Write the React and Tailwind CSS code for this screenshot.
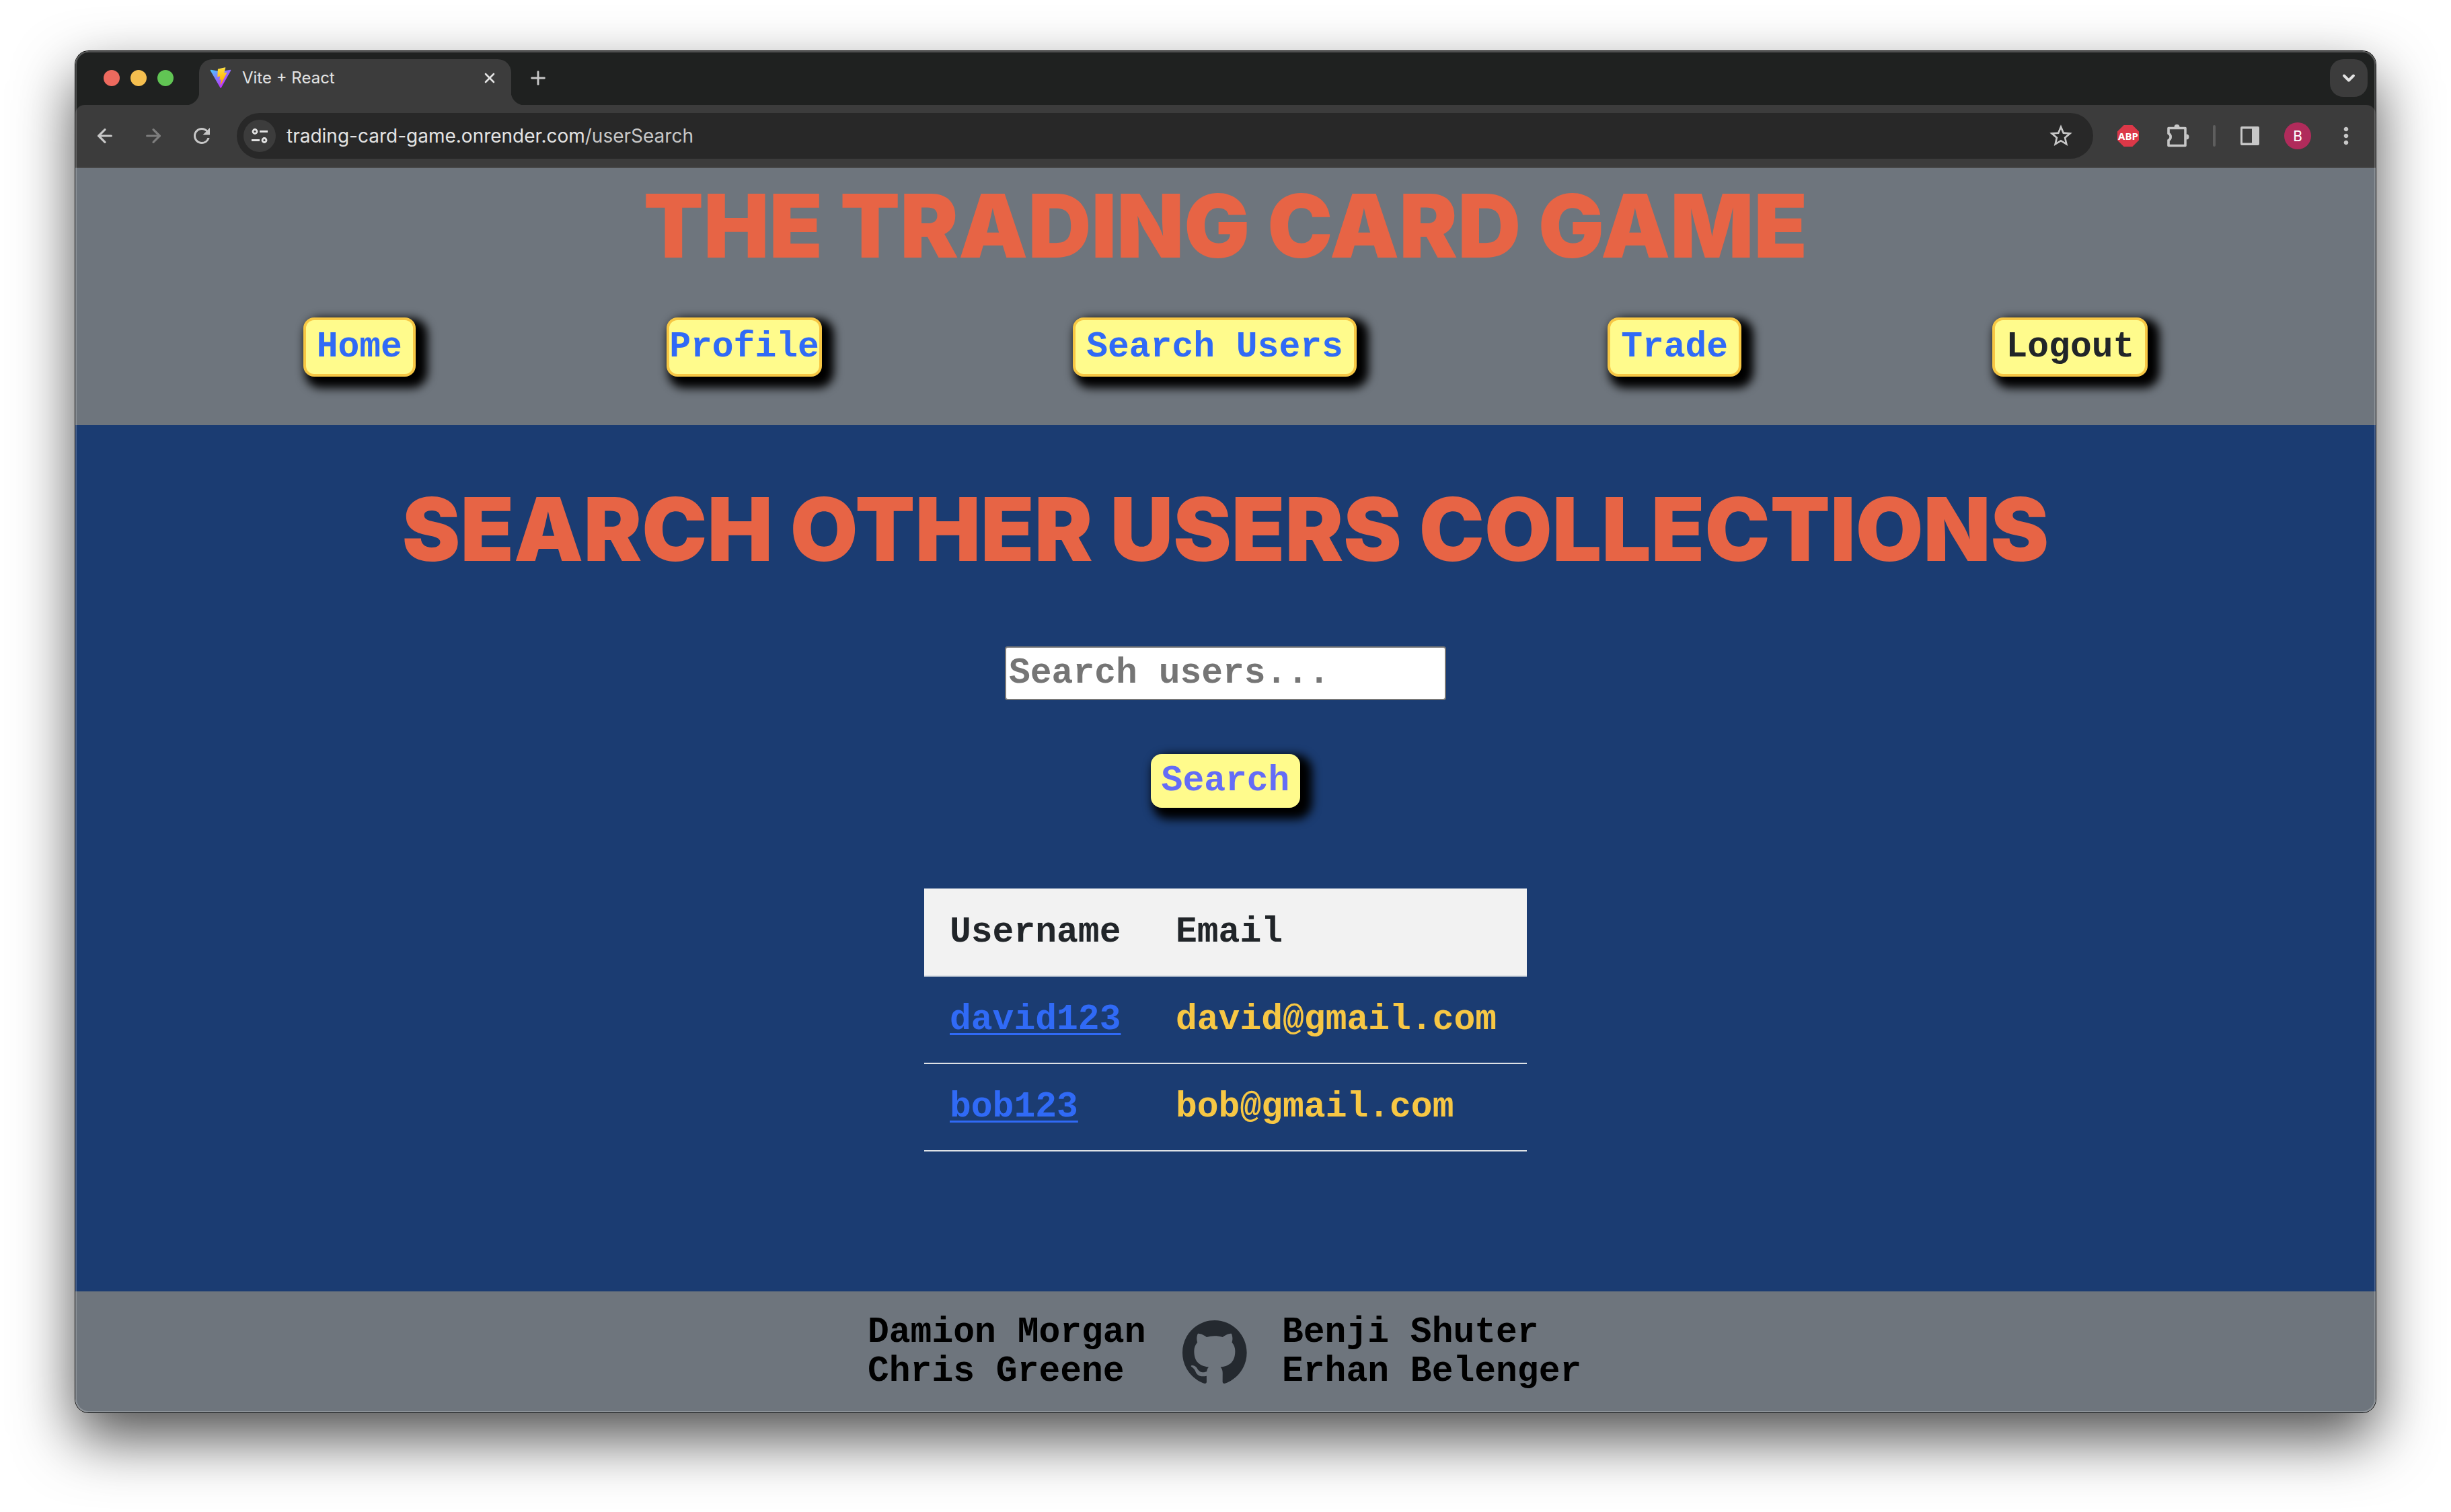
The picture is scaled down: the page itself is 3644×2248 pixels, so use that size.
import React from "react";
import { ArrowLeft, ArrowRight, ChevronDown, Plus, X } from "lucide-react";
import { MdRefresh, MdStarBorder, MdMoreVert } from "react-icons/md";

const mono = "font-['Liberation_Mono',monospace] font-bold text-[53px]";
const display = "font-['Inter',sans-serif] font-black text-[130px] leading-[172px] text-[#e76445] text-center";
const raised = "rounded-[16px] bg-[#fffb8c] shadow-[10px_9px_14px_8px_#000]";

function ViteLogo() {
  return (
    <svg viewBox="0 0 410 404" className="size-8" aria-hidden="true">
      <defs>
        <linearGradient id="vite-a" x1="6" y1="33" x2="235" y2="344" gradientUnits="userSpaceOnUse">
          <stop stopColor="#41D1FF" />
          <stop offset="1" stopColor="#BD34FE" />
        </linearGradient>
        <linearGradient id="vite-b" x1="194" y1="9" x2="236" y2="293" gradientUnits="userSpaceOnUse">
          <stop stopColor="#FFEA83" />
          <stop offset="0.08" stopColor="#FFDD35" />
          <stop offset="1" stopColor="#FFA800" />
        </linearGradient>
      </defs>
      <path
        d="M399.641 59.525L215.643 388.545C211.844 395.338 202.084 395.378 198.228 388.618L10.582 59.556C6.381 52.19 12.68 43.267 21.028 44.759L205.223 77.682C206.398 77.892 207.601 77.89 208.776 77.676L389.119 44.806C397.439 43.289 403.768 52.143 399.641 59.525Z"
        fill="url(#vite-a)"
      />
      <path
        d="M292.965 1.574L156.801 28.255C154.563 28.694 152.906 30.59 152.771 32.866L144.395 174.33C144.198 177.662 147.258 180.248 150.51 179.498L188.42 170.749C191.967 169.931 195.172 173.055 194.443 176.622L183.18 231.775C182.422 235.487 185.907 238.661 189.532 237.56L212.947 230.446C216.577 229.344 220.065 232.527 219.297 236.242L201.398 322.875C200.278 328.294 207.486 331.249 210.492 326.603L212.5 323.5L323.454 102.072C325.312 98.365 322.108 94.137 318.036 94.923L279.014 102.454C275.347 103.161 272.227 99.746 273.262 96.158L298.731 7.867C299.767 4.273 296.636 0.855 292.965 1.574Z"
        fill="url(#vite-b)"
      />
    </svg>
  );
}

function TuneIcon() {
  return (
    <svg viewBox="0 0 24 24" className="size-6" fill="none" stroke="#e3e3e3" strokeWidth="2.8" aria-hidden="true">
      <circle cx="5" cy="5.5" r="3" />
      <path d="M12 5.5h12M0 18.5h12" />
      <circle cx="19" cy="18.5" r="3" />
    </svg>
  );
}

function PuzzleIcon() {
  return (
    <svg viewBox="0 0 36 36" className="size-9" fill="none" aria-hidden="true">
      <path
        d="M4 6.500h25v26H4v-8a5.500 5.500 0 0 0 0-10z"
        stroke="#c7c7c7"
        strokeWidth="3.600"
        strokeLinejoin="round"
      />
      <path d="M12.500 5a4 4 0 0 1 8 0zM30.500 15.500a4 4 0 0 1 0 8z" fill="#c7c7c7" />
    </svg>
  );
}

function SidePanelIcon() {
  return (
    <svg viewBox="0 0 30 30" className="size-[30px]" aria-hidden="true">
      <path
        fillRule="evenodd"
        d="M3 1h24a2 2 0 0 1 2 2v24a2 2 0 0 1-2 2H3a2 2 0 0 1-2-2V3a2 2 0 0 1 2-2zM4 4.500v21h14v-21z"
        fill="#c7c7c7"
      />
    </svg>
  );
}

function GithubMark() {
  return (
    <svg viewBox="0 0 98 96" className="h-24 w-24" aria-hidden="true">
      <path
        fillRule="evenodd"
        clipRule="evenodd"
        fill="#24292f"
        d="M48.854 0C21.839 0 0 22 0 49.217c0 21.756 13.993 40.172 33.405 46.69 2.427.49 3.316-1.059 3.316-2.362 0-1.141-.08-5.052-.08-9.127-13.59 2.934-16.42-5.867-16.42-5.867-2.184-5.704-5.42-7.17-5.42-7.17-4.448-3.015.324-3.015.324-3.015 4.934.326 7.523 5.052 7.523 5.052 4.367 7.496 11.404 5.378 14.235 4.074.404-3.178 1.699-5.378 3.074-6.6-10.839-1.141-22.243-5.378-22.243-24.283 0-5.378 1.94-9.778 5.014-13.2-.485-1.222-2.184-6.275.486-13.038 0 0 4.125-1.304 13.426 5.052a46.97 46.97 0 0 1 12.214-1.63c4.125 0 8.33.571 12.213 1.63 9.302-6.356 13.427-5.052 13.427-5.052 2.67 6.763.97 11.816.485 13.038 3.155 3.422 5.015 7.822 5.015 13.2 0 18.905-11.404 23.06-22.324 24.283 1.78 1.548 3.316 4.481 3.316 9.126 0 6.6-.08 11.897-.08 13.526 0 1.304.89 2.853 3.316 2.364 19.412-6.52 33.405-24.935 33.405-46.691C97.707 22 75.788 0 48.854 0z"
      />
    </svg>
  );
}

function TabStrip() {
  return (
    <div className="flex h-20 items-end bg-[#1f2120] pr-3 pl-[42px]">
      <div className="flex gap-4 self-center">
        <button aria-label="Close window" className="size-6 rounded-full bg-[#ed6a5e]" />
        <button aria-label="Minimize window" className="size-6 rounded-full bg-[#f5bf4f]" />
        <button aria-label="Zoom window" className="size-6 rounded-full bg-[#61c554]" />
      </div>
      <span className="ml-[18px] size-5 bg-[radial-gradient(circle_at_0_0,transparent_20px,#3c3c3c_21px)]" />
      <div className="flex h-[68px] w-[464px] items-center rounded-t-[20px] bg-[#3c3c3c] pr-5 pb-3 pl-4">
        <ViteLogo />
        <span className="ml-4 flex-1 font-['Inter',sans-serif] text-[24px] leading-8 text-[#e3e3e3]">Vite + React</span>
        <button aria-label="Close tab" className="text-[#e3e3e3]">
          <X className="size-6" strokeWidth={2.6} />
        </button>
      </div>
      <span className="size-5 bg-[radial-gradient(circle_at_100%_0,transparent_20px,#3c3c3c_21px)]" />
      <button aria-label="New tab" className="ml-1 self-center text-[#c7c7c7]">
        <Plus className="size-8" strokeWidth={2.2} />
      </button>
      <button
        aria-label="Search tabs"
        className="mb-3 ml-auto flex size-14 items-center justify-center rounded-[20px] bg-[#3c3c3c] text-[#e3e3e3]"
      >
        <ChevronDown className="size-7" strokeWidth={3.4} />
      </button>
    </div>
  );
}

function Toolbar() {
  return (
    <div className="bg-[#1f2120]">
      <div className="flex h-[94px] items-center rounded-t-[14px] border-b-2 border-[#474747] bg-[#3c3c3c] pr-6 pl-7 text-[#c7c7c7]">
        <button aria-label="Back">
          <ArrowLeft className="size-8" strokeWidth={2.4} />
        </button>
        <button aria-label="Forward" className="ml-10 text-[#7d7d7d]">
          <ArrowRight className="size-8" strokeWidth={2.4} />
        </button>
        <button aria-label="Reload" className="ml-[38px]">
          <MdRefresh className="size-9" />
        </button>
        <div className="ml-[34px] flex h-[68px] flex-1 items-center rounded-full bg-[#282828] pr-7 pl-[10px]">
          <button aria-label="Site information" className="flex size-12 items-center justify-center rounded-full bg-[#3c3c3c]">
            <TuneIcon />
          </button>
          <span className="ml-4 flex-1 font-['Inter',sans-serif] text-[28px] leading-9 text-[#c7c7c7]">
            <span className="text-[#e3e3e3]">trading-card-game.onrender.com</span>/userSearch
          </span>
          <button aria-label="Bookmark this page">
            <MdStarBorder className="size-10" />
          </button>
        </div>
        <button
          aria-label="Adblock Plus"
          className="ml-9 flex size-8 items-center justify-center bg-[#dc3848] font-['Open_Sans',sans-serif] text-[15px] font-bold text-white [clip-path:polygon(30%_0,70%_0,100%_30%,100%_70%,70%_100%,30%_100%,0_70%,0_30%)]"
        >
          ABP
        </button>
        <button aria-label="Extensions" className="ml-10">
          <PuzzleIcon />
        </button>
        <span className="ml-[34px] h-8 w-1 rounded-full bg-[#5e5e5e]" />
        <button aria-label="Side panel" className="ml-9">
          <SidePanelIcon />
        </button>
        <button
          aria-label="Profile B"
          className="ml-9 flex size-10 items-center justify-center rounded-full bg-[#b02b5b] font-['Roboto',sans-serif] text-[22px] text-white"
        >
          B
        </button>
        <button aria-label="Menu" className="ml-8">
          <MdMoreVert className="size-10" />
        </button>
      </div>
    </div>
  );
}

const navButton = `${raised} h-[88px] border-4 border-[#f7c744] whitespace-nowrap`;

function SiteHeader() {
  return (
    <header className="bg-[#6e757d] pb-[72px]">
      <h1 className={display}>THE TRADING CARD GAME</h1>
      <nav className={`${mono} mt-[50px] flex justify-around px-[152px] leading-[80px] text-[#306af6]`}>
        <a href="#home" className={`${navButton} px-4`}>Home</a>
        <a href="#profile" className={navButton}>Profile</a>
        <a href="#search" className={`${navButton} px-4`}>Search Users</a>
        <a href="#trade" className={`${navButton} px-4`}>Trade</a>
        <button className={`${navButton} px-4 text-[#212529]`}>Logout</button>
      </nav>
    </header>
  );
}

const users = [
  { name: "david123", email: "david@gmail.com" },
  { name: "bob123", email: "bob@gmail.com" },
];

function UserSearch() {
  return (
    <main className="flex flex-1 flex-col items-center bg-[#1b3c72] pt-[69px] pb-20">
      <h2 className={display}>SEARCH OTHER USERS COLLECTIONS</h2>
      <form className={`${mono} mt-[88px] flex flex-col items-center gap-20`} onSubmit={(e) => e.preventDefault()}>
        <input
          type="text"
          aria-label="Search users"
          placeholder="Search users..."
          className="h-20 w-[656px] rounded-[4px] border-2 border-[#767676] bg-white px-1 placeholder:text-[#757575]"
        />
        <button className={`${raised} h-20 px-4 leading-[80px] text-[#646cf6]`}>Search</button>
      </form>
      <table className={`${mono} mt-[120px] text-left leading-[64px]`}>
        <thead>
          <tr className="border-b-2 border-[#dee2e6] bg-[#f2f2f2] text-[#212529]">
            <th className="h-[130px] w-[336px] px-[38px]">Username</th>
            <th className="w-[560px] px-[38px]">Email</th>
          </tr>
        </thead>
        <tbody>
          {users.map((u) => (
            <tr key={u.name} className="border-b-2 border-[#dee2e6]">
              <td className="h-[130px] px-[38px]">
                <a href={`#${u.name}`} className="text-[#306af6] underline decoration-[3px] underline-offset-[6px]">
                  {u.name}
                </a>
              </td>
              <td className="px-[38px] text-[#f7c744]">{u.email}</td>
            </tr>
          ))}
        </tbody>
      </table>
    </main>
  );
}

function SiteFooter() {
  return (
    <footer className={`${mono} flex h-[180px] items-center justify-center gap-[52px] bg-[#6e757d] leading-[58px] text-black`}>
      <div className="w-[416px] whitespace-nowrap">
        <p>Damion Morgan</p>
        <p>Chris Greene</p>
      </div>
      <a href="#github" aria-label="GitHub">
        <GithubMark />
      </a>
      <div className="w-[448px] whitespace-nowrap">
        <p>Benji Shuter</p>
        <p>Erhan Belenger</p>
      </div>
    </footer>
  );
}

export default function App() {
  return (
    <div className="flex min-h-screen flex-col bg-white px-28 pt-[76px] pb-[148px]">
      <div className="relative flex flex-1 flex-col rounded-[20px] shadow-[0_0_0_1px_#000,0_38px_88px_rgba(0,0,0,0.69)]">
        <div className="flex flex-1 flex-col overflow-hidden rounded-[20px]">
          <TabStrip />
          <Toolbar />
          <SiteHeader />
          <UserSearch />
          <SiteFooter />
        </div>
        <div className="pointer-events-none absolute inset-0 rounded-[20px] shadow-[inset_0_0_0_2px_rgba(255,255,255,0.22)]" />
      </div>
    </div>
  );
}
